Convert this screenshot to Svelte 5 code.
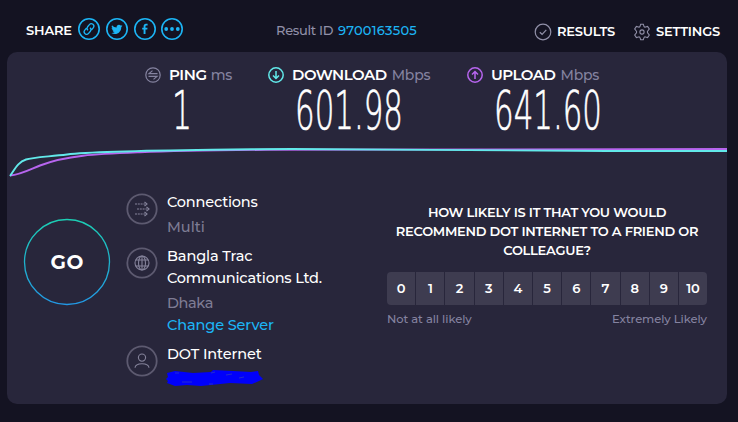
<script>
  const metrics = [
    { kind: 'ping', name: 'PING', unit: 'ms', value: '1', width: 20 },
    { kind: 'down', name: 'DOWNLOAD', unit: 'Mbps', value: '601.98', width: 108 },
    { kind: 'up', name: 'UPLOAD', unit: 'Mbps', value: '641.60', width: 108 }
  ];
  const scores = Array.from({ length: 11 }, (_, i) => i);
</script>

<main>
  <header>
    <div class="share">
      <b class="sharelabel">SHARE</b>
      <svg width="22" height="22" viewBox="0 0 22 22"><circle cx="11" cy="11" r="10.2" /><g transform="rotate(-50 11 11)" stroke-width="1.3"><path d="M10 8.5H7.4a2.5 2.5 0 0 0 0 5h2.8a2.5 2.5 0 0 0 2.4-2.5M12 13.5h2.6a2.5 2.5 0 0 0 0-5h-2.8A2.5 2.5 0 0 0 9.4 11" /></g></svg>
      <svg width="22" height="22" viewBox="0 0 22 22"><circle cx="11" cy="11" r="10.2" /><path class="solid" d="M16.5 7.7l-1.2.4.9-1.2-1.5.6a2.4 2.4 0 0 0-4.1 2.1A6.6 6.6 0 0 1 6 7.2a2.3 2.3 0 0 0 .7 3.1l-1.1-.3a2.4 2.4 0 0 0 1.9 2.3l-1 .1a2.4 2.4 0 0 0 2.2 1.6 5 5 0 0 1-3.4 1c4.8 2.7 10-.2 10-6z" /></svg>
      <svg width="22" height="22" viewBox="0 0 22 22"><circle cx="11" cy="11" r="10.2" /><path class="solid" d="M9.6 16v-4.4H8.2V9.8h1.4V8.3c0-1.6.9-2.5 2.4-2.5h1.6v1.7h-1.1c-.8 0-1 .3-1 1v1.3h2l-.2 1.8h-1.8V16z" /></svg>
      <svg width="22" height="22" viewBox="0 0 22 22"><circle cx="11" cy="11" r="10.2" /><g class="solid"><circle cx="5.2" cy="11" r="1.9" /><circle cx="11" cy="11" r="1.9" /><circle cx="16.8" cy="11" r="1.9" /></g></svg>
    </div>
    <div class="result"><span class="rid">Result ID</span><a>9700163505</a></div>
    <nav>
      <svg width="18" height="18" viewBox="0 0 18 18"><circle cx="9" cy="9" r="7.8" /><path d="M5.8 9.2l2.3 2.1 4.2-4.5" /></svg>
      <b class="results">RESULTS</b>
      <svg class="gear" width="18" height="18" viewBox="0 0 18 18"><path d="M7.7 1.2h2.6l.6 1.9a1.3 1.3 0 0 0 1.7.9l2-.6 1.7 2.6-1.3 1.6a1.9 1.9 0 0 0 0 2.8l1.3 1.6-1.7 2.6-2-.6a1.3 1.3 0 0 0-1.7.9l-.6 1.9H7.7l-.6-1.9a1.3 1.3 0 0 0-1.7-.9l-2 .6L1.700 12 3 10.400a1.900 1.900 0 0 0 0-2.800L1.700 6l1.700-2.600 2 .6a1.300 1.300 0 0 0 1.700-.9z" /><circle cx="9" cy="9" r="2.1" /></svg>
      <b class="settings">SETTINGS</b>
    </nav>
  </header>

  <section class="panel">
    <div class="metrics">
      {#each metrics as m}
        <div class="metric {m.kind}">
          <div class="title">
            <svg width="16" height="16" viewBox="0 0 16 16"><circle cx="8" cy="8" r="7.2" />
              {#if m.kind === 'ping'}<path d="M12.5 6.6H4l3.500-3M3.500 9.400H12l-3.500 3" />
              {:else if m.kind === 'down'}<path d="M8 4v7.300M5 8.500l3 3 3-3" />
              {:else}<path d="M8 12V4.700M5 7.500l3-3 3 3" />{/if}
            </svg>
            <b>{m.name}</b><span>{m.unit}</span>
          </div>
          <svg class="value" width={m.width} height="46" viewBox="0 0 {m.width} 46"><text x="0" y="42" textLength={m.width} lengthAdjust="spacingAndGlyphs">{m.value}</text></svg>
        </div>
      {/each}
    </div>

    <svg class="graph" width="720" height="34" viewBox="0 0 720 34">
      <path stroke="#b765ee" d="M3 31.500C13 31 22 26 33 21.500C60 11 90 10 133 8.300C165 7 210 6.300 260 5.800C390 5 560 5.500 720 5" />
      <path stroke="#62e9ea" d="M3 32C8 25 11 18 19 15.500C25 13.500 40 12.800 60 10.500C80 8 150 6.500 205 5.800C230 5.500 260 5 285 5C400 5 490 7 600 7L720 7" />
    </svg>

    <div class="lower">
      <svg class="go" width="88" height="88" viewBox="0 0 88 88">
        <defs><linearGradient id="ring" x1="0" y1="0" x2="0" y2="1"><stop offset="0" stop-color="#1cceb4" /><stop offset="1" stop-color="#2298e5" /></linearGradient></defs>
        <circle cx="44" cy="44" r="42.5" stroke="url(#ring)" /><text x="44" y="51" textLength="33" text-anchor="middle">GO</text>
      </svg>

      <div class="details">
        <div class="row first">
          <svg width="32" height="32" viewBox="0 0 32 32"><circle class="ring" cx="16" cy="16" r="14.7" /><path stroke-dasharray="2 .8" d="M9 11h10M11 16h10M9 21h10" /><path d="M18.500 9l2.500 2-2.500 2M20.500 14l2.500 2-2.500 2M18.500 19l2.500 2-2.500 2" /></svg>
          <div><p class="tight">Connections</p><p class="muted">Multi</p></div>
        </div>
        <div class="row second">
          <svg width="32" height="32" viewBox="0 0 32 32"><circle class="ring" cx="16" cy="16" r="14.7" /><circle cx="16" cy="16" r="7" /><ellipse cx="16" cy="16" rx="3.5" ry="7" /><path d="M9.800 13h12.400M9.800 19h12.400M16 9v14" /></svg>
          <div><p>Bangla Trac</p><p class="tight">Communications Ltd.</p><p class="muted city">Dhaka</p><p class="link">Change Server</p></div>
        </div>
        <div class="row third">
          <svg width="32" height="32" viewBox="0 0 32 32"><circle class="ring" cx="16" cy="16" r="14.7" /><circle cx="16" cy="12.6" r="3.6" /><path d="M9 22.800c.5-5.400 13.500-5.400 14 0" /></svg>
          <div><p>DOT Internet</p>
            <svg class="mark" width="98" height="16" viewBox="0 0 98 16"><path fill="#0000fb" d="M1 2l8-2 18 2 18-1 2-2 20 1 18 1 7-1 1 4 4 4-4 2-7 3-22-1-29 3-14-1-12 1-8-3 1-2-2-2 2-2z" /><path stroke="#3440bc" stroke-width=".7" d="M9 2h4M45 2l4-1M60 4l6-1M16 11h10M43 13h4M73 7l5-1" /></svg>
          </div>
        </div>
      </div>

      <div class="survey">
        <h2><span>HOW LIKELY IS IT THAT YOU WOULD</span><span>RECOMMEND DOT INTERNET TO A FRIEND OR</span><span>COLLEAGUE?</span></h2>
        <div class="scores">{#each scores as n}<span>{n}</span>{/each}</div>
        <div class="ends"><span>Not at all likely</span><span>Extremely Likely</span></div>
      </div>
    </div>
  </section>
</main>

<style>
  :global(body) { margin: 0; background: #141322; }
  main { box-sizing: border-box; width: 738px; height: 422px; overflow: hidden; padding: 0 11px 0 7px; background: #141322; color: #fff; font-family: Montserrat, Inter, sans-serif; white-space: nowrap; }
  svg { display: block; flex: none; fill: none; stroke: currentColor; stroke-width: 1.2; }
  b { font-weight: 600; }
  header { height: 52px; display: flex; font-size: 13px; line-height: 18px; }
  .share { display: flex; padding: 18px 0 0 19px; width: 250px; box-sizing: border-box; color: #1cb5f5; }
  .share svg { margin-right: 6px; stroke-width: 1.6; }
  .share svg:nth-of-type(3) { margin-right: 5px; }
  .sharelabel { color: #fff; width: 52px; padding-top: 3px; letter-spacing: -.15px; }
  .solid { fill: currentColor; stroke: none; }
  .result { display: flex; width: 277px; padding: 21px 0 0 19px; box-sizing: border-box; color: #9190a8; }
  .rid { width: 62px; letter-spacing: -.3px; font-weight: 500; }
  .result a { color: #1cb5f5; font-weight: 500; letter-spacing: .25px; }
  nav { display: flex; padding-top: 23px; color: #9190a8; }
  nav b { color: #fff; margin: -1px 0 0 5px; letter-spacing: -.2px; }
  .results { width: 76px; }
  .gear { stroke-width: 1.1; }
  .panel { width: 720px; height: 352px; border-radius: 10px; background: #28263b; }
  .metrics { display: flex; height: 92px; padding: 14px 0 0 138px; box-sizing: border-box; }
  .metric { width: 123px; }
  .metric.down { width: 199px; }
  .title { display: flex; align-items: center; height: 18px; font-size: 15px; line-height: 18px; }
  .title b { margin: 0 5px 0 8px; letter-spacing: -.5px; }
  .title span { color: #8583a0; font-weight: 500; font-size: 14px; letter-spacing: -.2px; }
  .ping .title b { letter-spacing: -.4px; margin-right: 4px; }
  .ping .title svg { color: #8583a0; }
  .down .title svg { color: #62e9ea; stroke-width: 1.5; }
  .up .title svg { color: #b765ee; stroke-width: 1.5; }
  .value { margin: 3px 0 0 27px; fill: #fff; stroke: #fff; stroke-width: .7; font: 200 54px "DejaVu Sans", sans-serif; overflow: visible; }
  .graph { stroke-width: 1.9; }
  .lower { display: flex; height: 226px; }
  .go { margin: 40px 0 0 16px; stroke-width: 1.3; }
  .go text { fill: #fff; stroke: none; font: 700 20px Montserrat, Inter, sans-serif; }
  .details { width: 276px; padding: 13px 0 0 15px; box-sizing: border-box; }
  .row { display: flex; color: #85839b; }
  .row > svg { stroke-width: 1.1; margin-top: 2px; }
  .ring { stroke: #5d5a70; stroke-width: 1.8; }
  .row > div { margin-left: 9px; }
  p { margin: 0; color: #fff; font-size: 14.5px; font-weight: 500; line-height: 22px; letter-spacing: -.12px; }
  p.tight { letter-spacing: -.18px; }
  p.muted { color: #7e7c94; margin-top: 3px; letter-spacing: 0; }
  p.city { letter-spacing: -.4px; }
  p.link { color: #1cb5f5; }
  .first { height: 54px; }
  .second { height: 98px; }
  .mark { margin: 6px 0 0 -1px; stroke: none; overflow: visible; }
  .survey { width: 320px; flex: none; padding-top: 25px; }
  h2 { margin: 0; font-size: 13px; line-height: 19px; font-weight: 600; text-align: center; letter-spacing: -.27px; }
  h2 span { display: block; }
  .scores { display: flex; gap: 1px; height: 33px; margin-top: 12px; border-radius: 4px; overflow: hidden; }
  .scores span { flex: 1 1 0; background: #3e3c50; text-align: center; font: 600 13px/33px Montserrat, Inter, sans-serif; letter-spacing: -.2px; }
  .ends { display: flex; justify-content: space-between; margin-top: 6px; font-size: 11.5px; font-weight: 500; line-height: 17px; letter-spacing: -.05px; color: #8583a0; }
</style>
